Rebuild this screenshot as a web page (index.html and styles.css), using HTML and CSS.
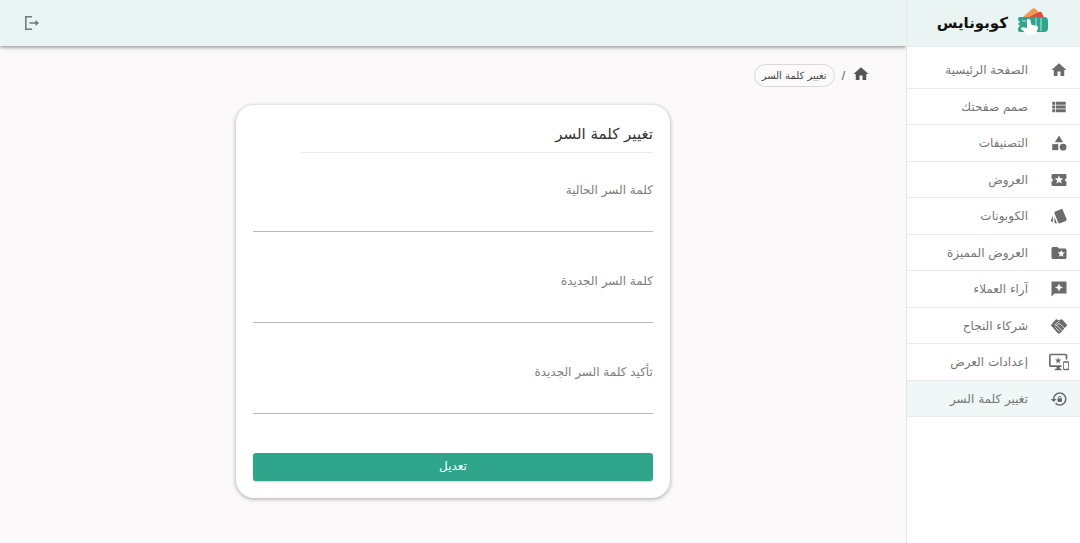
FILE: index.html
```html
<!DOCTYPE html>
<html lang="ar" dir="rtl">
<head>
    <meta charset="UTF-8">
    <meta name="viewport" content="width=device-width, initial-scale=1.0">
    <title>تغيير كلمة السر</title>
    <link rel="stylesheet" href="styles.css">
</head>
<body>
    <aside class="sidebar">
        <a class="brand" href="#">
            <svg class="brand-logo" viewBox="0 2 30 28" aria-hidden="true">
                <path fill="#f0994e" d="M5 10l9-8q2-1.500 3.500 0l3 3L13 12z"/>
                <path fill="#e4483f" d="M11 10l10-5q2-.8 3 1l2 5-8 3z"/>
                <path fill="#2fa58b" d="M2 10h14l2-1 2 1h6q4 0 4 4v7q0 4-4 4H2q-2 0-2-2v-2l2-2-2-2 2-2-2-2v-1q0-2 2-2z"/>
                <path fill="none" stroke="#bfe3da" d="M18 11v9M23 11v13M4 14h4"/>
                <path fill="#fff" d="M10 12q1.500-1 2.200.8l1.300 5 5 1q2 .6 1.500 2.700L18 26q-.5 1.500-2 1.500H9.500L3 22q-.5-1.600 1.500-1.800L9 21 8.800 13z"/>
            </svg>
            <span>كوبونايس</span>
        </a>
        <nav class="menu">
            <a class="menu-item" href="#">
                <svg class="icon" viewBox="0 0 24 24"><path d="M10 20v-6h4v6h5v-8h3L12 3 2 12h3v8z"/></svg>
                <span>الصفحة الرئيسية</span>
            </a>
            <a class="menu-item" href="#">
                <svg class="icon" viewBox="0 0 24 24"><path d="M3 14h4v-4H3v4zm0 5h4v-4H3v4zM3 9h4V5H3v4zm5 5h13v-4H8v4zm0 5h13v-4H8v4zM8 5v4h13V5H8z"/></svg>
                <span>صمم صفحتك</span>
            </a>
            <a class="menu-item" href="#">
                <svg class="icon" viewBox="0 0 24 24"><path d="M12 2l-5.500 9h11z"/><circle cx="17.500" cy="17.500" r="4.500"/><path d="M3 13.500h8v8H3z"/></svg>
                <span>التصنيفات</span>
            </a>
            <a class="menu-item" href="#">
                <svg class="icon" viewBox="0 0 24 24"><path d="M20 12c0-1.100.9-2 2-2V6c0-1.100-.9-2-2-2H4c-1.100 0-1.990.9-1.990 2v4c1.100 0 1.990.9 1.990 2s-.89 2-2 2v4c0 1.100.9 2 2 2h16c1.100 0 2-.9 2-2v-4c-1.100 0-2-.9-2-2zm-4.420 4.800L12 14.500l-3.580 2.300 1.080-4.120-3.290-2.690 4.240-.25L12 5.800l1.540 3.950 4.240.25-3.290 2.690 1.090 4.110z"/></svg>
                <span>العروض</span>
            </a>
            <a class="menu-item" href="#">
                <svg class="icon" viewBox="0 0 24 24"><path d="M2.530 19.650l1.340.56v-9.030l-2.430 5.860c-.41 1.020.08 2.190 1.090 2.610zm19.500-3.700L17.070 3.980c-.31-.75-1.040-1.210-1.810-1.230-.26 0-.53.04-.79.15L7.100 5.950c-.75.31-1.210 1.030-1.230 1.800-.01.27.04.54.15.8l4.960 11.970c.31.76 1.050 1.220 1.830 1.230.26 0 .52-.05.77-.15l7.360-3.050c1.020-.42 1.510-1.590 1.090-2.600zM5.880 19.750c0 1.100.9 2 2 2h1.450l-3.450-8.340v6.340z"/></svg>
                <span>الكوبونات</span>
            </a>
            <a class="menu-item" href="#">
                <svg class="icon" viewBox="0 0 24 24"><path d="M20 6h-8l-2-2H4c-1.100 0-2 .9-2 2v12c0 1.100.9 2 2 2h16c1.100 0 2-.9 2-2V8c0-1.100-.9-2-2-2zm-2.060 11L15 15.280 12.060 17l.78-3.330-2.590-2.240 3.410-.29L15 8l1.340 3.140 3.410.29-2.590 2.240.78 3.330z"/></svg>
                <span>العروض المميزة</span>
            </a>
            <a class="menu-item" href="#">
                <svg class="icon" viewBox="0 0 24 24"><path d="M22 2H2v20l4-4h16V2zm-8.400 9.600L12 15.500l-1.600-3.900L6.500 10l3.900-1.600L12 4.500l1.600 3.900 3.900 1.600z"/></svg>
                <span>آراء العملاء</span>
            </a>
            <a class="menu-item" href="#">
                <svg class="icon" viewBox="0 0 24 24"><path d="M1 11l6-7q1.500-1.500 3.500-.5l1.500.8 1.500-.8q2-1 3.500.5l6 7-9.500 10.500q-1.500 1.300-3 0z"/><path class="icon-cut" d="M12.500 5l-6 5.500q1.500 1.800 3.500 0l2.500-2 7.500 7M9.500 11.500l7 7M7 13.500l6 6"/></svg>
                <span>شركاء النجاح</span>
            </a>
            <a class="menu-item" href="#">
                <svg class="icon icon-wide" viewBox="0 0 24 24"><path d="M23 11.010L18 11c-.55 0-1 .45-1 1v9c0 .55.45 1 1 1h5c.55 0 1-.45 1-1v-9c0-.55-.45-.99-1-.99zM23 20h-5v-7h5v7zM20 2H2C.89 2 0 2.890 0 4v12c0 1.100.89 2 2 2h7v2H7v2h8v-2h-2v-2h2v-2H2V4h18v5h2V4c0-1.110-.9-2-2-2zm-8.030 7L11 6l-.97 3H7l2.470 1.760-.94 2.910 2.470-1.800 2.470 1.800-.94-2.910L15 9h-3.030z"/></svg>
                <span>إعدادات العرض</span>
            </a>
            <a class="menu-item active" href="#">
                <svg class="icon" viewBox="0 0 24 24"><path d="M13 3c-4.970 0-9 4.030-9 9H1l4 4 4-4H6c0-3.860 3.140-7 7-7s7 3.140 7 7-3.140 7-7 7c-1.900 0-3.620-.76-4.880-1.990L6.700 18.420C8.320 20.010 10.550 21 13 21c4.970 0 9-4.030 9-9s-4.030-9-9-9zm2 8v-1c0-1.100-.9-2-2-2s-2 .9-2 2v1c-.55 0-1 .45-1 1v3c0 .55.45 1 1 1h4c.55 0 1-.45 1-1v-3c0-.55-.45-1-1-1zm-1 0h-2v-1c0-.55.45-1 1-1s1 .45 1 1v1z"/></svg>
                <span>تغيير كلمة السر</span>
            </a>
        </nav>
    </aside>

    <div class="page">
        <header class="topbar">
            <button class="logout-button" type="button" aria-label="تسجيل الخروج">
                <svg viewBox="0 0 16 16"><path d="M8 1.800H1.800v12.400H8M5.500 8h8"/><path class="arrow" d="M11.500 5l3.500 3-3.500 3z"/></svg>
            </button>
        </header>

        <main>
            <div class="breadcrumb">
                <a class="crumb-home" href="#" aria-label="الصفحة الرئيسية">
                    <svg class="icon" viewBox="0 0 24 24"><path d="M10 20v-6h4v6h5v-8h3L12 3 2 12h3v8z"/></svg>
                </a>
                <span>/</span>
                <a class="crumb" href="#">تغيير كلمة السر</a>
            </div>

            <form class="card">
                <h1>تغيير كلمة السر</h1>
                <div class="field">
                    <label for="current-password">كلمة السر الحالية</label>
                    <input type="password" id="current-password">
                </div>
                <div class="field">
                    <label for="new-password">كلمة السر الجديدة</label>
                    <input type="password" id="new-password">
                </div>
                <div class="field">
                    <label for="confirm-password">تأكيد كلمة السر الجديدة</label>
                    <input type="password" id="confirm-password">
                </div>
                <button class="save-button" type="button">تعديل</button>
            </form>
        </main>
    </div>
</body>
</html>
```
FILE: styles.css
```css
* {
    box-sizing: border-box;
}
body {
    font-family: "DejaVu Sans", sans-serif;
    margin: 0;
    min-height: 100vh;
    display: flex;
    background-color: #fbf9fa;
    color: #444;
}
a {
    color: inherit;
    text-decoration: none;
}
.sidebar {
    width: 174px;
    flex-shrink: 0;
    background-color: white;
    border-left: 1px solid #e6e6e6;
    z-index: 1;
}
.brand {
    height: 47px;
    padding: 0 32px;
    display: flex;
    align-items: center;
    gap: 10px;
    background-color: #eaf4f3;
    border-bottom: 1px solid #e2ebea;
    color: #111;
    font-size: 15px;
    font-weight: bold;
    white-space: nowrap;
}
.brand-logo {
    width: 30px;
    height: 28px;
    flex-shrink: 0;
    overflow: visible;
}
.menu {
    display: grid;
    grid-auto-rows: 1fr;
    min-height: 365px;
    margin-top: 5px;
}
.menu-item {
    display: flex;
    align-items: center;
    gap: 22px;
    padding: 1px 12px 0;
    border-bottom: 1px solid #e9e9e9;
    color: #757575;
    font-size: 12px;
    white-space: nowrap;
}
.menu-item.active {
    background-color: #eff8f7;
}
.icon {
    width: 18px;
    height: 18px;
    flex-shrink: 0;
    fill: #6b6b6b;
    overflow: visible;
}
.icon-wide {
    width: 20px;
    height: 20px;
    margin: 0 -1px;
}
.icon-cut {
    fill: none;
    stroke: white;
    stroke-width: 1;
}
.page {
    flex: 1;
    min-width: 0;
}
.topbar {
    height: 46px;
    padding: 0 24px;
    display: flex;
    align-items: center;
    justify-content: flex-end;
    background-color: #eaf4f3;
    box-shadow: 0 1px 4px rgba(0,0,0,0.5);
}
.logout-button {
    display: flex;
    padding: 0;
    border: none;
    background: none;
    cursor: pointer;
}
.logout-button svg {
    width: 16px;
    height: 16px;
    fill: none;
    stroke: #707876;
    stroke-width: 1.5;
}
.logout-button .arrow {
    fill: #707876;
    stroke: none;
}
main {
    padding: 18px 36px;
}
.breadcrumb {
    display: flex;
    align-items: center;
    gap: 7px;
    font-size: 10px;
}
.crumb-home {
    display: flex;
    padding-bottom: 4px;
}
.crumb-home .icon {
    fill: #555;
}
.crumb {
    height: 23px;
    padding: 0 7px;
    line-height: 21px;
    border: 1px solid #d8d8d8;
    border-radius: 12px;
}
.card {
    width: 52%;
    margin: 18px auto 0;
    padding: 17px;
    background-color: white;
    border-radius: 18px;
    box-shadow: 0 1px 4px rgba(0,0,0,0.35);
}
.card h1 {
    width: 88%;
    margin: 0 0 27px;
    padding-bottom: 6px;
    border-bottom: 1px solid #ececec;
    color: #333;
    font-size: 15px;
    font-weight: normal;
    line-height: 24px;
}
.field {
    margin-bottom: 39px;
}
.field label {
    display: block;
    color: #7d7d7d;
    font-size: 12px;
    line-height: 20px;
}
.field input {
    display: block;
    width: 100%;
    height: 32px;
    padding: 0;
    border: none;
    border-bottom: 1px solid #b8b8b8;
    background: none;
    font-family: inherit;
    font-size: 12px;
    outline: none;
}
.save-button {
    display: block;
    width: 100%;
    height: 28px;
    padding: 0 0 2px;
    border: none;
    border-radius: 3px;
    background-color: #2fa58b;
    box-shadow: 0 1px 2px rgba(0,0,0,0.2);
    color: white;
    font-family: inherit;
    font-size: 12px;
    cursor: pointer;
}
```
